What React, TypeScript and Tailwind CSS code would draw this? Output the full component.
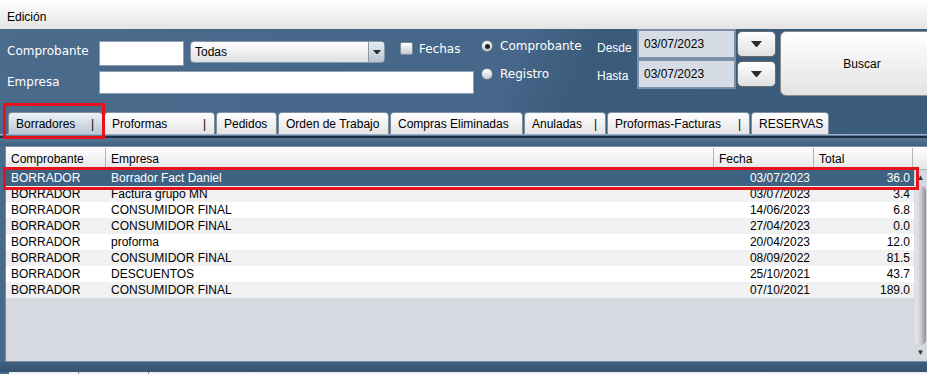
import React from "react";

const rows = [
  ["BORRADOR", "Borrador Fact Daniel", "03/07/2023", "36.0"],
  ["BORRADOR", "Factura grupo MN", "03/07/2023", "3.4"],
  ["BORRADOR", "CONSUMIDOR FINAL", "14/06/2023", "6.8"],
  ["BORRADOR", "CONSUMIDOR FINAL", "27/04/2023", "0.0"],
  ["BORRADOR", "proforma", "20/04/2023", "12.0"],
  ["BORRADOR", "CONSUMIDOR FINAL", "08/09/2022", "81.5"],
  ["BORRADOR", "DESCUENTOS", "25/10/2021", "43.7"],
  ["BORRADOR", "CONSUMIDOR FINAL", "07/10/2021", "189.0"],
];

const tabs: { label: string; w: string; bar: boolean }[] = [
  { label: "Borradores", w: "w-[95px]", bar: true },
  { label: "Proformas", w: "w-[111px]", bar: true },
  { label: "Pedidos", w: "w-[61px]", bar: false },
  { label: "Orden de Trabajo", w: "w-[111px]", bar: false },
  { label: "Compras Eliminadas", w: "w-[133px]", bar: false },
  { label: "Anuladas", w: "w-[82px]", bar: true },
  { label: "Proformas-Facturas", w: "w-[143px]", bar: true },
  { label: "RESERVAS", w: "w-[78px]", bar: false },
];

function Down({ size = 9 }: { size?: number }) {
  return (
    <svg width={size} height={size * 0.6} viewBox="0 0 10 6">
      <polygon points="0,0 10,0 5,6" fill="#2b2b2b" />
    </svg>
  );
}

function Radio({ on }: { on?: boolean }) {
  return (
    <span className="flex h-[12px] w-[12px] shrink-0 items-center justify-center rounded-full border border-[#6f7f90] bg-gradient-to-b from-white to-[#c9ced4]">
      {on && <span className="h-[5px] w-[5px] rounded-full bg-[#222]" />}
    </span>
  );
}

export default function App() {
  const label = "font-['DejaVu_Sans',sans-serif] text-[12px] text-white";
  return (
    <div className="relative h-[374px] w-[927px] overflow-hidden bg-[linear-gradient(112deg,#4a6b8b_0%,#46668a_50%,#3b5b7b_57%,#3c5c7c_100%)] font-['Liberation_Sans',Arial,sans-serif] text-[12px] text-black">
      {/* menu */}
      <div className="flex h-[29px] items-center bg-gradient-to-b from-white to-[#e4e4e4] pl-[7px] pt-[4px] text-[12px]">
        Edición
      </div>

      {/* filters */}
      <div className="flex h-[83px] items-start">
        <div className="mt-[12px] w-[475px] shrink-0">
          <div className="flex h-[29px] items-start">
            <span className={`${label} w-[99px] shrink-0 pl-[7px] leading-[20px]`}>Comprobante</span>
            <div className="h-[25px] w-[85px] shrink-0 border border-[#8fa0b2] bg-white" />
            <div className="ml-[6px] flex h-[22px] w-[195px] shrink-0 items-center overflow-hidden rounded-[4px] border border-[#8a97a6] bg-gradient-to-b from-white to-[#dedfe1]">
              <span className="flex-1 pl-[4px]">Todas</span>
              <span className="flex h-full w-[16px] items-center justify-center border-l border-[#8a97a6] bg-gradient-to-b from-[#e8edf3] to-[#b8c4d1]">
                <Down size={8} />
              </span>
            </div>
            <span className="ml-[15px] mt-[1px] h-[13px] w-[13px] shrink-0 rounded-[2px] border border-[#7d8b9a] bg-gradient-to-b from-white to-[#c7ccd2]" />
            <span className={`${label} ml-[6px] leading-[16px]`}>Fechas</span>
          </div>
          <div className="mt-[1px] flex h-[23px] items-center">
            <span className={`${label} w-[99px] shrink-0 pl-[7px] pb-[2px]`}>Empresa</span>
            <div className="h-[23px] w-[375px] shrink-0 border border-[#8fa0b2] bg-white" />
          </div>
        </div>

        <div className="ml-[6px] mt-[8px] flex w-[116px] shrink-0 flex-col gap-[10px]">
          <div className="flex h-[18px] items-center gap-[7px]">
            <Radio on />
            <span className={label}>Comprobante</span>
          </div>
          <div className="flex h-[18px] items-center gap-[7px]">
            <Radio />
            <span className={label}>Registro</span>
          </div>
        </div>

        <div className="flex shrink-0 flex-col">
          {["Desde", "Hasta"].map((l, i) => (
            <div key={l} className="flex h-[30px] items-center">
              <span className={`w-[40px] shrink-0 text-[12px] text-white ${i === 0 ? "pt-[7px]" : "pt-[4px]"}`}>{l}</span>
              <div className="flex h-[30px] w-[99px] shrink-0 items-center border-2 border-[#7b90a6] bg-[#d5dce5] pl-[5px]">
                03/07/2023
              </div>
              <div className="ml-[1px] flex h-[26px] w-[39px] shrink-0 items-center justify-center rounded-[5px] border border-[#6b6b6b] bg-gradient-to-b from-white to-[#e0e0e0]">
                <Down size={11} />
              </div>
            </div>
          ))}
        </div>

        <div className="ml-[4px] mt-[2px] flex h-[65px] w-[164px] shrink-0 items-center justify-center rounded-[6px] border border-[#8c8c8c] bg-gradient-to-b from-white to-[#e3e3e3]">
          Buscar
        </div>
      </div>

      {/* tabs */}
      <div className="flex h-[22px] items-end gap-[1px] pl-[8px]">
        {tabs.map((t, i) => (
          <div
            key={t.label}
            className={`flex h-[22px] shrink-0 ${t.w} items-center rounded-t-[4px] border border-b-0 border-[#7e8fa1] pl-[7px] pr-[8px] ${
              i === 0 ? "bg-gradient-to-b from-[#eef2f6] to-[#b9c6d4]" : "bg-gradient-to-b from-white to-[#e4e4e4]"
            }`}
          >
            <span>{t.label}</span>
            {t.bar && <span className="ml-auto">|</span>}
          </div>
        ))}
      </div>
      <div className="h-[12px] border-t border-[#9fb2c5] bg-gradient-to-b from-[#62809d] to-[#3f6080]">
        <div className="mt-[1px] h-[2px] bg-[#1b2c44]" />
      </div>

      {/* table */}
      <div className="ml-[5px] flex h-[216px] w-[922px] flex-col border-l border-t border-b border-[#7d8da0] bg-[#d6d9e0]">
        <div className="flex h-[23px] items-center border-b border-[#b9b9b9] bg-gradient-to-b from-white to-[#e6e6e6] pt-[1px] text-[12px]">
          <span className="w-[100px] shrink-0 border-r border-[#b5b5b5] pl-[5px] leading-[22px]">Comprobante</span>
          <span className="w-[608px] shrink-0 border-r border-[#b5b5b5] pl-[5px] leading-[22px]">Empresa</span>
          <span className="w-[100px] shrink-0 border-r border-[#b5b5b5] pl-[5px] leading-[22px]">Fecha</span>
          <span className="w-[99px] shrink-0 border-r border-[#b5b5b5] pl-[5px] leading-[22px]">Total</span>
          <span className="flex-1" />
        </div>
        <div className="flex flex-1">
          <div className="w-[908px] shrink-0">
            {rows.map((r, i) => (
              <div
                key={i}
                className={`flex h-[16px] items-center leading-[16px] ${
                  i === 0 ? "bg-[#3d6282] text-white" : i % 2 === 1 ? "bg-[#f1f1f1]" : "bg-white"
                }`}
              >
                <span className="w-[100px] shrink-0 pl-[5px]">{r[0]}</span>
                <span className="w-[608px] shrink-0 pl-[5px]">{r[1]}</span>
                <span className="w-[100px] shrink-0 pr-[4px] text-right">{r[2]}</span>
                <span className="w-[100px] shrink-0 pr-[4px] text-right">{r[3]}</span>
              </div>
            ))}
          </div>
          <div className="flex w-[14px] flex-col bg-[#d6d9e0]">
            <div className="flex h-[16px] items-center justify-center text-[8px] text-[#333]">▲</div>
            <div className="mx-[1px] flex-1 rounded-[5px] bg-gradient-to-r from-[#e9e9e9] via-[#cfd0d3] to-[#8e9095]" />
            <div className="flex h-[16px] items-center justify-center text-[8px] text-[#333]">▼</div>
          </div>
        </div>
      </div>
      <div className="h-[10px] bg-gradient-to-b from-[#3e5f7f] to-[#35536f]" />
      <div className="ml-[9px] flex h-[2px] bg-[#eef0f3]">
        <span className="w-[70px] border-r border-[#8a8a8a]" />
        <span className="w-[70px] border-r border-[#8a8a8a]" />
      </div>

      {/* highlight boxes */}
      <div className="absolute left-[3px] top-[103px] h-[36px] w-[102px] border-[3px] border-[#e5141c]" />
      <div className="absolute left-[3px] top-[167px] h-[23px] w-[916px] border-[3px] border-[#e5141c]" />
    </div>
  );
}
